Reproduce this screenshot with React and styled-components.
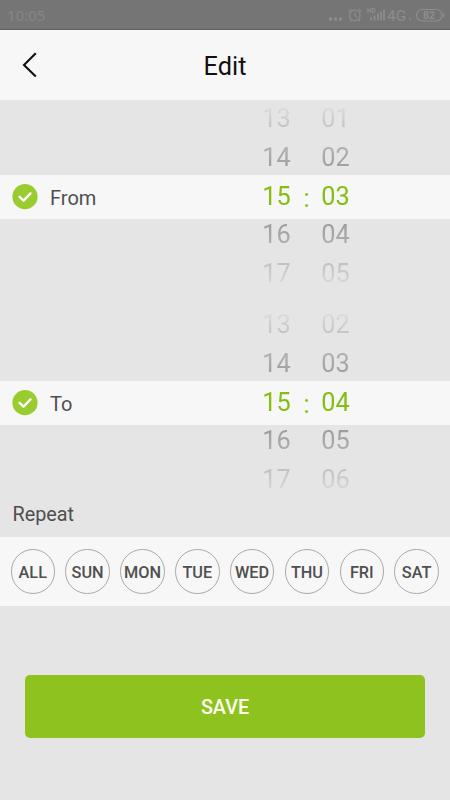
import React from "react";
import styled, { createGlobalStyle } from "styled-components";

const GREEN = "#8ec31f";
const LIGHT = "#f7f7f7";
const GRAY = "#e5e5e5";
const TEXT = "#4f4f4f";

const DAYS = ["ALL", "SUN", "MON", "TUE", "WED", "THU", "FRI", "SAT"];

const StatusIcons = () => (
  <svg width="118" height="20" viewBox="0 0 118 20" fill="none" stroke="#8d8d8d" strokeWidth="1.2">
    <g fill="#8d8d8d" stroke="none">
      <rect x="1" y="12.5" width="3" height="3" />
      <rect x="6" y="12.5" width="3" height="3" />
      <rect x="11" y="12.5" width="3" height="3" />
    </g>
    <circle cx="26.8" cy="10.5" r="5.3" />
    <path d="M27 7.5v3.2l2.2 1.4M20.3 6.6l3-2.6M33.4 6.6l-3-2.6M23.2 14.8l-1.4 1.6M30.6 14.8l1.4 1.6" />
    <path d="M43 12v3.5M46.5 10.5v5M50 8.5v7M53 6.5v9M56 4.5v11" strokeWidth="1.8" />
    <path d="M82 13v2.5" />
    <rect x="88.6" y="4.5" width="25.4" height="11.5" rx="5.7" />
    <path d="M115.7 8.5v3.5" strokeWidth="1.6" />
    <g fill="#8d8d8d" stroke="none" fontFamily="Roboto, sans-serif">
      <text x="39" y="8" fontSize="6.5" fontWeight="700">HD</text>
      <text x="59" y="15.8" fontSize="15.5">4G</text>
      <text x="95" y="14" fontSize="10.5" fontWeight="700">82</text>
    </g>
  </svg>
);

const CheckIcon = () => (
  <svg width="26" height="26" viewBox="0 0 26 26">
    <circle cx="13" cy="12.7" r="12.6" fill="#99cc2e" />
    <path d="M7.6 12.9l3.9 3.7 7-7.2" fill="none" stroke="#fff" strokeWidth="2.4" strokeLinecap="round" strokeLinejoin="round" />
  </svg>
);

const TimePicker = ({ label, hours, minutes }) => (
  <Picker>
    <Band>
      <CheckIcon />
      <Label>{label}</Label>
    </Band>
    <Wheels>
      <Wheel>
        {hours.map((hour, i) => (
          <Digit key={hour} $selected={i === 2}>{hour}</Digit>
        ))}
      </Wheel>
      <Colon>:</Colon>
      <Wheel>
        {minutes.map((minute, i) => (
          <Digit key={minute} $selected={i === 2}>{minute}</Digit>
        ))}
      </Wheel>
    </Wheels>
  </Picker>
);

export default function App() {
  return (
    <>
      <GlobalStyle />
      <Screen>
        <StatusBar>
          <Clock>10:05</Clock>
          <StatusIcons />
        </StatusBar>
        <Header>
          <BackButton aria-label="Back">
            <svg width="16" height="26" viewBox="0 0 16 26" fill="none" stroke="#111" strokeWidth="2.1">
              <path d="M13.8 1.3L2 13l11.8 11.4" />
            </svg>
          </BackButton>
          <Title>Edit</Title>
        </Header>
        <TimePicker
          label="From"
          hours={["13", "14", "15", "16", "17"]}
          minutes={["01", "02", "03", "04", "05"]}
        />
        <TimePicker
          label="To"
          hours={["13", "14", "15", "16", "17"]}
          minutes={["02", "03", "04", "05", "06"]}
        />
        <RepeatTitle>Repeat</RepeatTitle>
        <DayRow>
          {DAYS.map(day => (
            <Day key={day}>{day}</Day>
          ))}
        </DayRow>
        <SaveButton>SAVE</SaveButton>
      </Screen>
    </>
  );
}

const GlobalStyle = createGlobalStyle`
  * {
    box-sizing: border-box;
  }

  body {
    margin: 0;
    background-color: ${GRAY};
    font-family: Roboto, "Liberation Sans", sans-serif;
  }

  button {
    padding: 0;
    border: none;
    background: none;
    font-family: inherit;
  }
`;

const Screen = styled.div`
  display: flex;
  flex-direction: column;
  width: 450px;
  height: 800px;
  overflow: hidden;
  background-color: ${GRAY};
`;

const StatusBar = styled.div`
  display: flex;
  align-items: center;
  justify-content: space-between;
  height: 30px;
  padding: 1px 4px 0 7px;
  border-bottom: 1px solid #5f5f5f;
  background-color: #757575;
`;

const Clock = styled.span`
  color: #868686;
  font-family: "Noto Sans", sans-serif;
  font-size: 15px;
`;

const Header = styled.header`
  display: grid;
  grid-template-columns: 60px 1fr 60px;
  align-items: center;
  height: 70px;
  background-color: ${LIGHT};
`;

const BackButton = styled.button`
  display: flex;
  justify-content: center;
`;

const Title = styled.h1`
  margin: 2px 0 0;
  color: #111;
  font-size: 25.3px;
  font-weight: 400;
  text-align: center;
`;

const Picker = styled.section`
  display: grid;
  grid-template-rows: 75px 44px 87px;
  height: 206px;
`;

const Band = styled.div`
  grid-area: 2 / 1;
  display: flex;
  align-items: center;
  gap: 12px;
  padding-left: 12px;
  background-color: ${LIGHT};
`;

const Label = styled.span`
  padding-top: 2px;
  color: ${TEXT};
  font-size: 20px;
`;

const Wheels = styled.div`
  grid-area: 1 / 1 / -1 / 2;
  display: grid;
  grid-template-columns: 30px 29px 30px;
  align-self: start;
  align-items: center;
  justify-self: start;
  margin-left: 261.5px;
`;

const Wheel = styled.div`
  display: flex;
  flex-direction: column;
  height: 193.75px;
  mask-image: linear-gradient(
    transparent,
    rgba(0, 0, 0, 0.42) 14%,
    #000 38%,
    #000 62%,
    rgba(0, 0, 0, 0.42) 86%,
    transparent
  );
`;

const Digit = styled.span`
  height: 38.75px;
  color: ${props => (props.$selected ? "#86bd12" : "#999")};
  font-size: 25.3px;
  line-height: 38.75px;
  text-align: center;
`;

const Colon = styled.span`
  padding: 3px 0 0 1px;
  color: #86bd12;
  font-size: 25px;
  text-align: center;
`;

const RepeatTitle = styled.h2`
  height: 25px;
  margin: 0;
  padding-left: 12.5px;
  color: ${TEXT};
  font-size: 19.8px;
  font-weight: 400;
  line-height: 5px;
`;

const DayRow = styled.div`
  display: flex;
  align-items: center;
  justify-content: space-between;
  height: 69px;
  padding: 0 11px 0 10.5px;
  background-color: ${LIGHT};
`;

const Day = styled.button`
  width: 44.5px;
  height: 44.5px;
  padding-top: 2px;
  border: 1px solid #aaa;
  border-radius: 50%;
  color: ${TEXT};
  font-size: 16.3px;
  font-weight: 500;
`;

const SaveButton = styled.button`
  height: 63px;
  margin: 69px 25px 0;
  padding-top: 1px;
  border-radius: 5px;
  background-color: ${GREEN};
  color: #fdfff0;
  font-size: 19.8px;
  font-weight: 500;
`;
